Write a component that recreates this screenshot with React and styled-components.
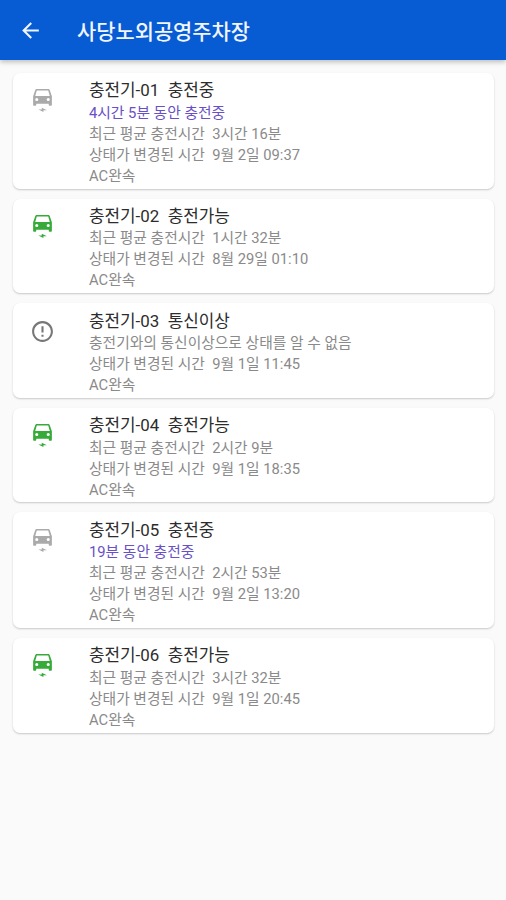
import React from "react";
import styled, { createGlobalStyle } from "styled-components";
import { MdArrowBack, MdErrorOutline } from "react-icons/md";

const GlobalStyle = createGlobalStyle`
  * { box-sizing: border-box; }
  body { margin: 0; background: #fafafa; font-family: Roboto, "Noto Sans CJK KR", sans-serif; }
`;
const Screen = styled.div`
  width: 506px; height: 900px; display: flex; flex-direction: column; background: #fafafa; overflow: hidden;
`;
const AppBar = styled.header`
  height: 60px; flex: none; display: flex; align-items: center; padding-left: 18px;
  background: #075cd4; color: #f1f5ff; box-shadow: 0 2px 5px rgba(0,0,0,.25);
`;
const BackButton = styled.button`
  display: flex; padding: 0; border: 0; background: none; color: inherit; font-size: 25px; margin-right: 34px;
`;
const Title = styled.h1`
  margin: 3px 0 0; font-size: 20.9px; line-height: 28px; font-weight: 500; white-space: nowrap;
`;
const List = styled.main`
  display: flex; flex-direction: column; gap: 10px; padding: 13px 12px 0 13px;
`;
const Card = styled.article`
  display: flex; height: ${p => (p.$tall ? 115.6 : 94.6)}px; padding-top: 6.4px; background: #fff; border-radius: 7px;
  box-shadow: 0 1px 2px rgba(0,0,0,.2);
`;
const IconSlot = styled.div`
  width: 76px; flex: none; padding: 9px 0 0 17px; color: ${p => p.$color};
  svg { display: block; }
`;
const Details = styled.div`display: flex; flex-direction: column;`;
const Name = styled.h2`
  margin: 0 0 1.4px; font-size: 16.9px; font-weight: 400; line-height: 22px; color: #2c2c2c; white-space: pre;
`;
const Line = styled.p`
  margin: 0; font-size: 14.75px; line-height: 21px; font-weight: 400;
  color: ${p => (p.$active ? "#6850c6" : "#8a8a8a")}; white-space: pre;
`;

const CarIcon = () => (
  <svg width="25" height="25" viewBox="0 0 24 24" fill="currentColor" aria-hidden="true">
    <path d="M18.92 2.01C18.72 1.42 18.16 1 17.5 1h-11c-.66 0-1.21.42-1.42 1.01L3 8v8c0 .55.45 1 1 1h1c.55 0 1-.45 1-1v-1h12v1c0 .55.45 1 1 1h1c.55 0 1-.45 1-1V8l-2.08-5.99zM6.5 12.500a1.500 1.500 0 1 1 0-3 1.500 1.500 0 0 1 0 3zm11 0a1.500 1.500 0 1 1 0-3 1.500 1.500 0 0 1 0 3zM5 7.600l1.500-5.100h11L19 7.600H5z" />
    <path d="M8 20.600h3.300v-1.700l4.900 2.400h-3.300v1.700z" />
  </svg>
);

const chargers = [
  { name: "충전기-01  충전중", active: "4시간 5분 동안 충전중", info: "최근 평균 충전시간  3시간 16분", time: "9월 2일 09:37", color: "#aaa" },
  { name: "충전기-02  충전가능", info: "최근 평균 충전시간  1시간 32분", time: "8월 29일 01:10", color: "#36ab3a" },
  { name: "충전기-03  통신이상", info: "충전기와의 통신이상으로 상태를 알 수 없음", time: "9월 1일 11:45", color: "#777", error: true },
  { name: "충전기-04  충전가능", info: "최근 평균 충전시간  2시간 9분", time: "9월 1일 18:35", color: "#36ab3a" },
  { name: "충전기-05  충전중", active: "19분 동안 충전중", info: "최근 평균 충전시간  2시간 53분", time: "9월 2일 13:20", color: "#aaa" },
  { name: "충전기-06  충전가능", info: "최근 평균 충전시간  3시간 32분", time: "9월 1일 20:45", color: "#36ab3a" },
];

export default function App() {
  return (
    <Screen>
      <GlobalStyle />
      <AppBar><BackButton aria-label="뒤로"><MdArrowBack /></BackButton><Title>사당노외공영주차장</Title></AppBar>
      <List>
        {chargers.map(c => (
          <Card key={c.name} $tall={!!c.active}>
            <IconSlot $color={c.color}>{c.error ? <MdErrorOutline size={25} /> : <CarIcon />}</IconSlot>
            <Details>
              <Name>{c.name}</Name>
              {c.active && <Line $active>{c.active}</Line>}
              <Line>{c.info}</Line>
              <Line>{"상태가 변경된 시간  " + c.time}</Line>
              <Line>AC완속</Line>
            </Details>
          </Card>
        ))}
      </List>
    </Screen>
  );
}
